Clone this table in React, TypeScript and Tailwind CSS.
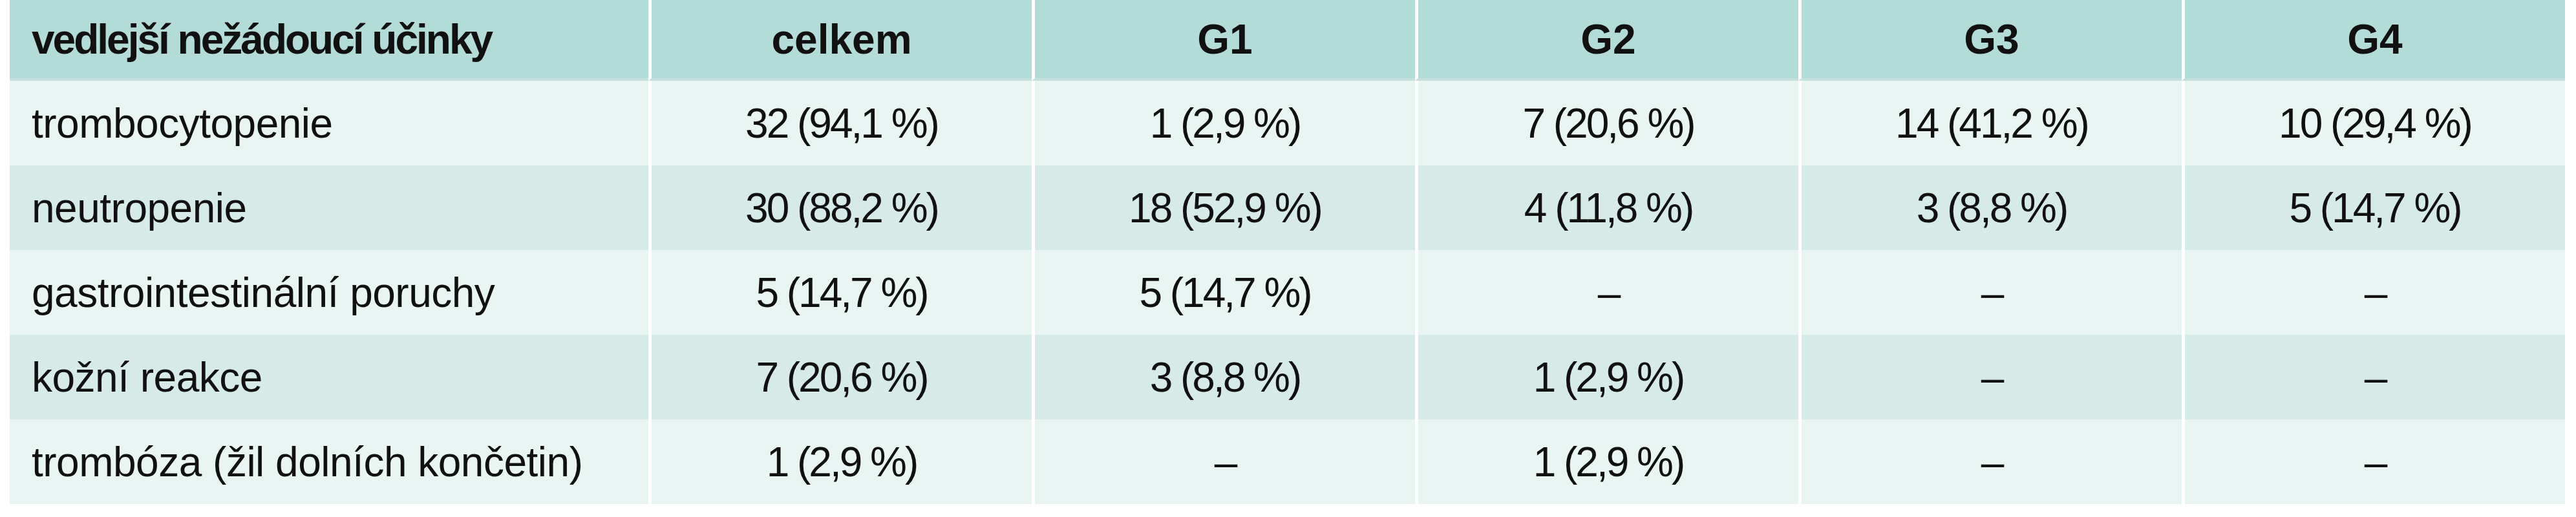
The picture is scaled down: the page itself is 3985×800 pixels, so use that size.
import React from "react";

const header = ["celkem", "G1", "G2", "G3", "G4"];

const rows: { label: string; values: string[] }[] = [
  { label: "trombocytopenie", values: ["32 (94,1 %)", "1 (2,9 %)", "7 (20,6 %)", "14 (41,2 %)", "10 (29,4 %)"] },
  { label: "neutropenie", values: ["30 (88,2 %)", "18 (52,9 %)", "4 (11,8 %)", "3 (8,8 %)", "5 (14,7 %)"] },
  { label: "gastrointestinální poruchy", values: ["5 (14,7 %)", "5 (14,7 %)", "–", "–", "–"] },
  { label: "kožní reakce", values: ["7 (20,6 %)", "3 (8,8 %)", "1 (2,9 %)", "–", "–"] },
  { label: "trombóza (žil dolních končetin)", values: ["1 (2,9 %)", "–", "1 (2,9 %)", "–", "–"] },
];

export default function App() {
  return (
    <div
      className="w-[3985px] h-[800px] bg-white pl-[15px] text-[64px] text-[#111111]"
      style={{ fontFamily: '"Liberation Sans", Arial, sans-serif' }}
    >
      <div className="grid grid-cols-[988px_repeat(5,593px)] w-[3953px]">
        <div className="h-[125px] flex items-center pl-[34px] bg-[#b3dbd8] border-b-[4px] border-[#c4e0de] font-bold tracking-[-3px]">
          vedlejší nežádoucí účinky
        </div>
        {header.map((h) => (
          <div
            key={h}
            className="h-[125px] flex items-center justify-center bg-[#b3dbd8] border-l-[5px] border-l-white border-b-[4px] border-b-[#c4e0de] font-bold"
          >
            {h}
          </div>
        ))}
        {rows.map((r, i) => {
          const bg = i % 2 === 0 ? "bg-[#e8f5f3]" : "bg-[#d6eae8]";
          return (
            <React.Fragment key={r.label}>
              <div className={`h-[131px] flex items-center pl-[34px] tracking-[-0.5px] ${bg}`}>{r.label}</div>
              {r.values.map((v, j) => (
                <div
                  key={j}
                  className={`h-[131px] flex items-center justify-center border-l-[5px] border-white tracking-[-3px] ${bg}`}
                >
                  {v}
                </div>
              ))}
            </React.Fragment>
          );
        })}
      </div>
    </div>
  );
}
